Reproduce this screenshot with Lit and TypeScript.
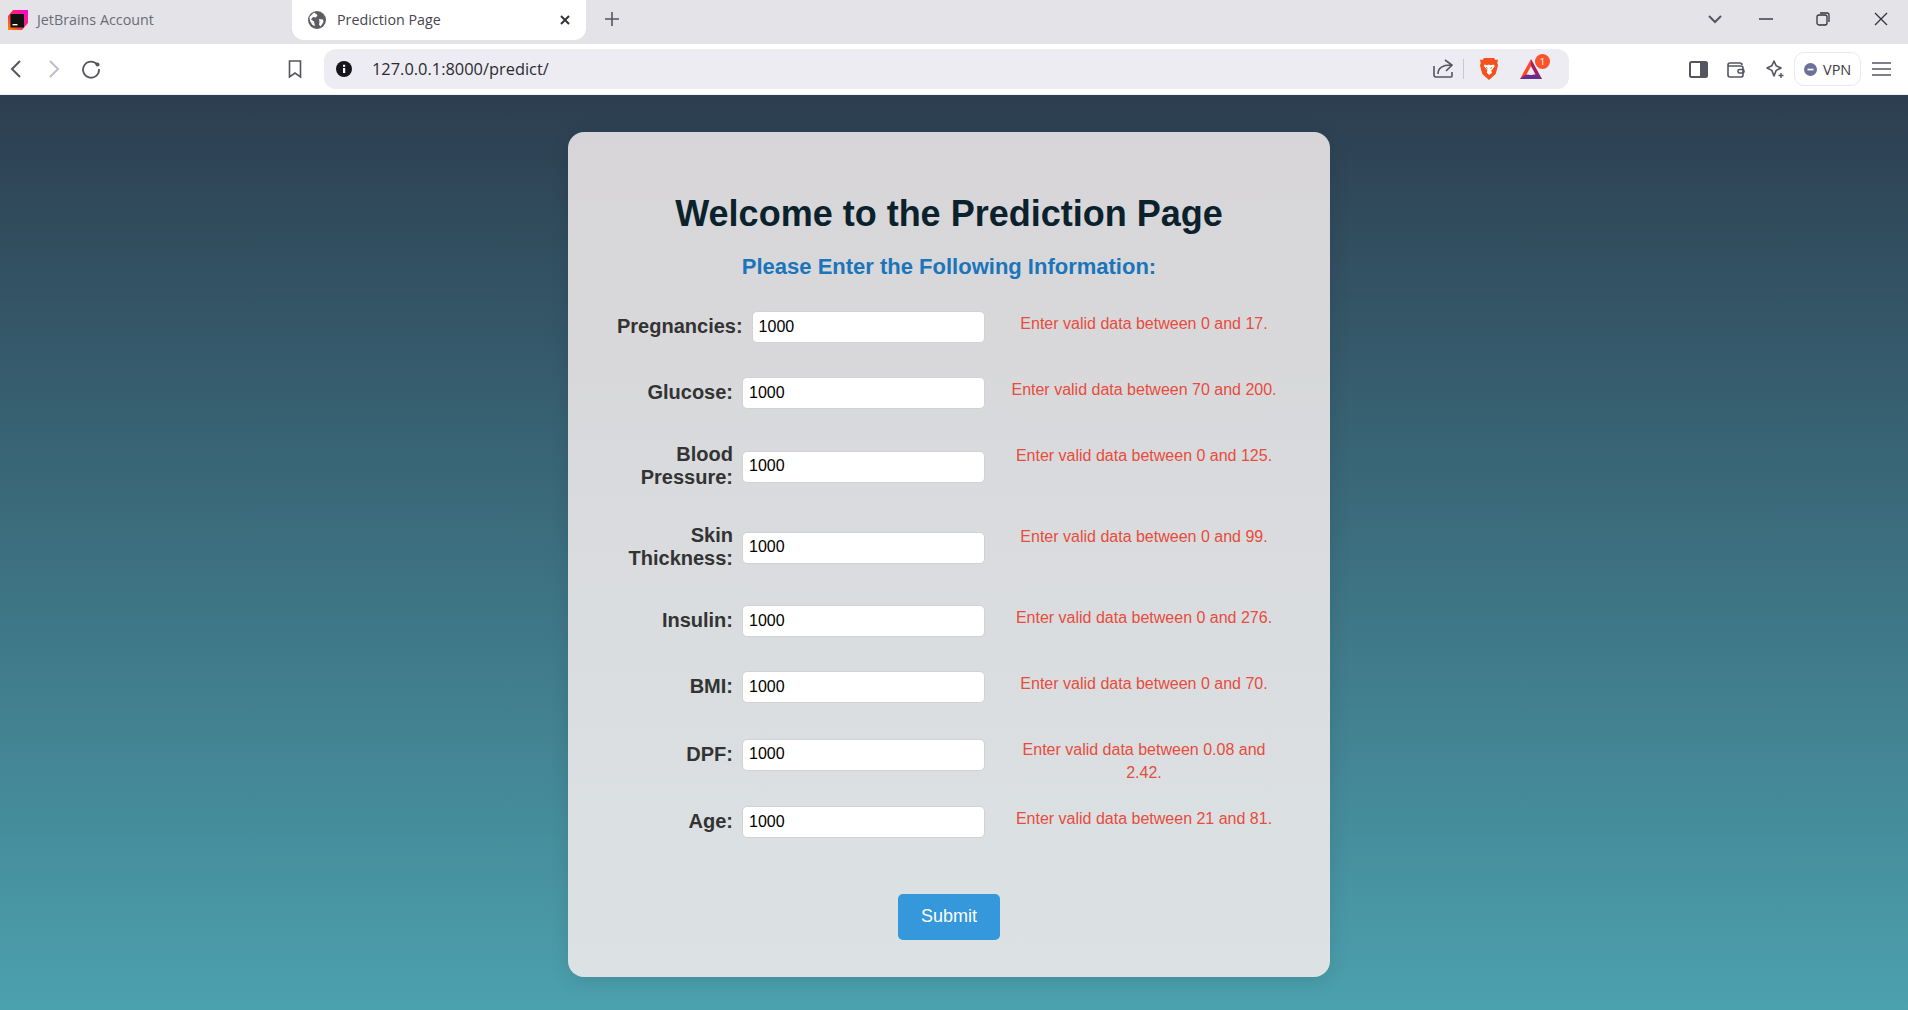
import { LitElement, html, css, svg } from "lit";
import { customElement } from "lit/decorators.js";

const FIELDS = [
  { label: "Pregnancies:", error: "Enter valid data between 0 and 17." },
  { label: "Glucose:", error: "Enter valid data between 70 and 200." },
  { label: "Blood Pressure:", error: "Enter valid data between 0 and 125." },
  { label: "Skin Thickness:", error: "Enter valid data between 0 and 99." },
  { label: "Insulin:", error: "Enter valid data between 0 and 276." },
  { label: "BMI:", error: "Enter valid data between 0 and 70." },
  { label: "DPF:", error: "Enter valid data between 0.08 and 2.42." },
  { label: "Age:", error: "Enter valid data between 21 and 81." },
];

const icon = (w: number, h: number, body: unknown) => html`<svg
  width=${w}
  height=${h}
  viewBox="0 0 ${w} ${h}"
  fill="none"
  stroke="#55555f"
  stroke-width="1.6"
>${body}</svg>`;

@customElement("app-root")
export class AppRoot extends LitElement {
  static styles = css`
    :host {
      display: flex;
      flex-direction: column;
      height: 1010px;
      overflow: hidden;
      font-family: "Liberation Sans", Arial, sans-serif;
    }
    svg {
      display: block;
      flex: none;
    }
    .tabstrip {
      height: 44px;
      flex: none;
      background: #e3e3e8;
      display: flex;
      font-family: "Open Sans", sans-serif;
      font-size: 14.3px;
    }
    .tab {
      display: flex;
      align-items: center;
      height: 40px;
      color: #6c6c76;
    }
    .tab.idle {
      width: 292px;
      padding-left: 8px;
      box-sizing: border-box;
      gap: 9px;
    }
    .tab.active {
      width: 294px;
      padding: 0 15px 0 16px;
      box-sizing: border-box;
      gap: 11px;
      background: #fff;
      color: #46464f;
      border-radius: 0 0 12px 12px;
    }
    .tab .title {
      flex: 1;
      padding-bottom: 2px;
    }
    .newtab {
      margin: 11px 0 0 18px;
    }
    .winctl {
      margin-left: auto;
      display: flex;
      align-items: center;
      height: 38px;
      padding-right: 20px;
    }
    .gap-chevron {
      width: 36px;
    }
    .gap-min {
      width: 43px;
    }
    .gap-restore {
      width: 44px;
    }
    .toolbar {
      height: 51px;
      flex: none;
      box-sizing: border-box;
      background: #fff;
      border-bottom: 1px solid #f1f1f4;
      display: flex;
      align-items: center;
      padding: 0 17px 0 9px;
      font-family: "Open Sans", sans-serif;
    }
    .nav {
      display: flex;
      align-items: center;
      gap: 24px;
      width: 315px;
    }
    .nav .reload {
      margin-left: -4px;
    }
    .nav .bookmark {
      margin-left: 162px;
    }
    .urlbar {
      width: 1245px;
      height: 40px;
      border-radius: 12px;
      background: #edecf2;
      display: flex;
      align-items: center;
      padding: 0 19px 0 12px;
      box-sizing: border-box;
      color: #2b2b33;
      font-size: 16.4px;
    }
    .url {
      margin-left: 20px;
      flex: 1;
      padding-bottom: 2px;
    }
    .divider {
      width: 1px;
      height: 20px;
      background: #c8c8ce;
      margin: 0 15px 0 10px;
    }
    .bat {
      position: relative;
      width: 30px;
      height: 30px;
      margin-left: 21px;
    }
    .bat svg {
      position: absolute;
      left: 0;
      top: 5px;
    }
    .badge {
      position: absolute;
      left: 15px;
      top: 0;
      width: 15px;
      height: 15px;
      border-radius: 50%;
      background: #fb542b;
      color: #fff;
      font-size: 9.5px;
      line-height: 15px;
      text-align: center;
    }
    .tools {
      margin-left: auto;
      display: flex;
      align-items: center;
    }
    .tools .wallet {
      margin-left: 19px;
    }
    .tools .star {
      margin-left: 20px;
    }
    .tools .burger {
      margin-left: 11px;
    }
    .vpn {
      display: flex;
      align-items: center;
      gap: 6px;
      width: 67px;
      height: 34px;
      box-sizing: border-box;
      padding-left: 9px;
      margin-left: 10px;
      border: 1px solid #e9e9ed;
      border-radius: 10px;
      color: #3c3c44;
      font-size: 14.5px;
    }
    .page {
      flex: 1;
      background: linear-gradient(180deg, #2c3e50, #4ca1af);
      display: flex;
      justify-content: center;
      align-items: flex-start;
      padding: 37px 10px 0 0;
    }
    .card {
      width: 762px;
      height: 845px;
      box-sizing: border-box;
      padding: 61px 40px 0;
      border-radius: 16px;
      background: linear-gradient(180deg, #d7d5d8, #dce2e4);
      box-shadow: 0 4px 20px rgba(0, 0, 0, 0.1);
      text-align: center;
    }
    h1 {
      margin: 0 0 20px;
      font-size: 36px;
      line-height: 41px;
      font-weight: bold;
      color: #0b222d;
    }
    h2 {
      margin: 0 0 33px;
      font-size: 22px;
      line-height: 25px;
      font-weight: bold;
      color: #1a75bb;
    }
    .row {
      display: flex;
      align-items: center;
      min-height: 31px;
      margin-bottom: 35px;
      padding-right: 6px;
    }
    .row.wide {
      padding-left: 9px;
    }
    label {
      flex: 0 0 125px;
      margin: -1px 10px 0 0;
      padding-bottom: 1px;
      text-align: right;
      font-size: 20px;
      line-height: 23px;
      font-weight: bold;
      color: #333;
    }
    input {
      flex: 1;
      min-width: 0;
      height: 32px;
      box-sizing: border-box;
      margin: -1px -1px 0;
      padding: 5px 6px 6px;
      border: 1px solid #d2d2d2;
      border-radius: 5px;
      background: #fff;
      color: #000;
      font: 16px "Liberation Sans", Arial, sans-serif;
    }
    .error {
      flex: 0 0 280px;
      align-self: flex-start;
      margin: 0 0 -12px 20px;
      font-size: 16px;
      line-height: 23px;
      color: #e74c3c;
    }
    button {
      display: block;
      width: 102px;
      height: 46px;
      margin: 56px auto 0;
      padding: 0 0 2px;
      border: none;
      border-radius: 5px;
      background: #3498db;
      color: #fff;
      font: 18px "Liberation Sans", Arial, sans-serif;
    }
  `;

  private jetbrainsLogo() {
    return html`<svg width="20" height="20" viewBox="0 0 20 20">
      <defs>
        <linearGradient id="jb" x1="0" y1="1" x2="1" y2="0">
          <stop offset="0" stop-color="#ff8a00" />
          <stop offset="0.45" stop-color="#fe2857" />
          <stop offset="1" stop-color="#f500e0" />
        </linearGradient>
      </defs>
      <path d="M5 0h15v13l-6 7H0V6z" fill="url(#jb)" />
      <rect x="2.5" y="4" width="13.5" height="13.5" fill="#111" />
      <rect x="4.5" y="14" width="5" height="1.4" fill="#fff" />
    </svg>`;
  }

  private globe() {
    return html`<svg width="18" height="18" viewBox="0 0 18 18">
      <circle cx="9" cy="9" r="9" fill="#5d5d66" />
      <path
        d="M6 1.5 9.5 4 8 6.5 5 6 3 8.5 6 10.5 7 15 4.5 14 2 10 1.5 6zM11 8l4 .5.5 2.500-3 4.500-1.500-2 .5-2.500z"
        fill="#fff"
      />
    </svg>`;
  }

  private lion() {
    return html`<svg width="20" height="22" viewBox="0 0 20 22">
      <path
        d="M5 0h10l1.500 2 2.500-.4-.7 3.400.7 2.500-2.300 8.500L10 22l-6.700-5.900L1 7.500 1.700 5 1 1.600 3.500 2z"
        fill="#f4511e"
      />
      <path
        d="M5.500 6.500 8.300 7.200 10 6.500l1.700.7 2.800-.7 1.300 1.600-2.300 3.400-1.300 1 .9 2.200L10 17l-2.400-2.800.9-2.200-1.300-1-2.300-3z"
        fill="#fff"
      />
      <path d="M8.500 10.500 7 9.500M11.500 10.500 13 9.500" stroke="#f4511e" stroke-width="1" />
    </svg>`;
  }

  private bat() {
    return html`<div class="bat">
      <svg width="22" height="20" viewBox="0 0 22 20">
        <path d="M11 0 0 20h7l4-8z" fill="#ff4724" />
        <path d="M11 0l11 20h-7l-4-8z" fill="#9e1f63" />
        <path d="M0 20l5-4h12l5 4z" fill="#662d91" />
        <path d="M11 7l4.500 8.500h-9z" fill="#edecf2" />
      </svg>
      <span class="badge">1</span>
    </div>`;
  }

  render() {
    return html`
      <div class="tabstrip">
        <div class="tab idle">${this.jetbrainsLogo()}<span class="title">JetBrains Account</span></div>
        <div class="tab active">
          ${this.globe()}<span class="title">Prediction Page</span>
          ${icon(12, 12, svg`<path d="M2 2l8 8M10 2l-8 8" stroke="#33333a" stroke-width="2"/>`)}
        </div>
        <div class="newtab">
          ${icon(16, 16, svg`<path d="M8 1v14M1 8h14"/>`)}
        </div>
        <div class="winctl">
          ${icon(16, 10, svg`<path d="M2 2l6 6 6-6" stroke-width="2"/>`)}
          <div class="gap-chevron"></div>
          ${icon(14, 4, svg`<path d="M0 2h14" stroke="#33333a" stroke-width="1.4"/>`)}
          <div class="gap-min"></div>
          ${icon(14, 14, svg`<rect x="1" y="3" width="10" height="10" rx="2" stroke="#33333a" stroke-width="1.3"/><path d="M4 1h7a2 2 0 0 1 2 2v7" stroke="#33333a" stroke-width="1.3"/>`)}
          <div class="gap-restore"></div>
          ${icon(14, 14, svg`<path d="M1 1l12 12M13 1 1 13" stroke="#33333a" stroke-width="1.3"/>`)}
        </div>
      </div>
      <div class="toolbar">
        <div class="nav">
          ${icon(14, 20, svg`<path d="M11 2 3 10l8 8" stroke-width="2"/>`)}
          ${icon(14, 20, svg`<path d="M3 2l8 8-8 8" stroke="#bfbfc6" stroke-width="2"/>`)}
          <div class="reload">
            ${icon(20, 20, svg`<path d="M16.500 6A8 8 0 1 0 18 10" stroke-width="1.8"/><circle cx="16.500" cy="5.500" r="2" fill="#55555f" stroke="none"/>`)}
          </div>
          <div class="bookmark">
            ${icon(16, 20, svg`<path d="M2.500 2h11v16L8 14l-5.500 4z"/>`)}
          </div>
        </div>
        <div class="urlbar">
          <svg width="16" height="16" viewBox="0 0 16 16">
            <circle cx="8" cy="8" r="8" fill="#16161c" />
            <rect x="7" y="7" width="2.2" height="5" fill="#fff" />
            <rect x="7" y="3.800" width="2.2" height="2" fill="#fff" />
          </svg>
          <span class="url">127.0.0.1:8000/predict/</span>
          ${icon(20, 20, svg`<path d="M1 7v9a2 2 0 0 0 2 2h15a1 1 0 0 0 1-1v-4M5 15c0-6 4-9 13-9M12 1l7 5-6 6"/>`)}
          <div class="divider"></div>
          ${this.lion()}
          ${this.bat()}
        </div>
        <div class="tools">
          ${icon(19, 17, svg`<rect x="1" y="1" width="17" height="15" rx="1.500" stroke-width="2"/><rect x="11" y="1" width="7" height="15" fill="#55555f" stroke="none"/>`)}
          <div class="wallet">
            ${icon(18, 17, svg`<path d="M1 4a2 2 0 0 1 2-2h10a2 2 0 0 1 2 2M1 4v10a2 2 0 0 0 2 2h11a2 2 0 0 0 2-2V7a2 2 0 0 0-2-2H1"/><rect x="11" y="8.500" width="6" height="3.500" rx="1.500"/>`)}
          </div>
          <div class="star">
            ${icon(19, 18, svg`<path d="M9 1l2.200 4.800L16 8l-4.800 2.400L9 16l-2.200-5.600L2 8l4.800-2.200z" stroke-linejoin="round"/><path d="M16 13v5M13.500 15.500h5" stroke-width="1.4"/>`)}
          </div>
          <div class="vpn">
            <svg width="13" height="13" viewBox="0 0 13 13">
              <circle cx="6.500" cy="6.500" r="6.500" fill="#6d7199" />
              <rect x="3.500" y="5.700" width="6" height="1.700" fill="#fff" />
            </svg>
            VPN
          </div>
          <div class="burger">
            ${icon(19, 16, svg`<path d="M0 2h19M0 8h19M0 14h19"/>`)}
          </div>
        </div>
      </div>
      <div class="page">
        <div class="card">
          <h1>Welcome to the Prediction Page</h1>
          <h2>Please Enter the Following Information:</h2>
          ${FIELDS.map(
            (f, i) => html`
              <div class="row ${i === 0 ? "wide" : ""}">
                <label>${f.label}</label>
                <input type="text" value="1000" />
                <div class="error">${f.error}</div>
              </div>
            `
          )}
          <button>Submit</button>
        </div>
      </div>
    `;
  }
}
